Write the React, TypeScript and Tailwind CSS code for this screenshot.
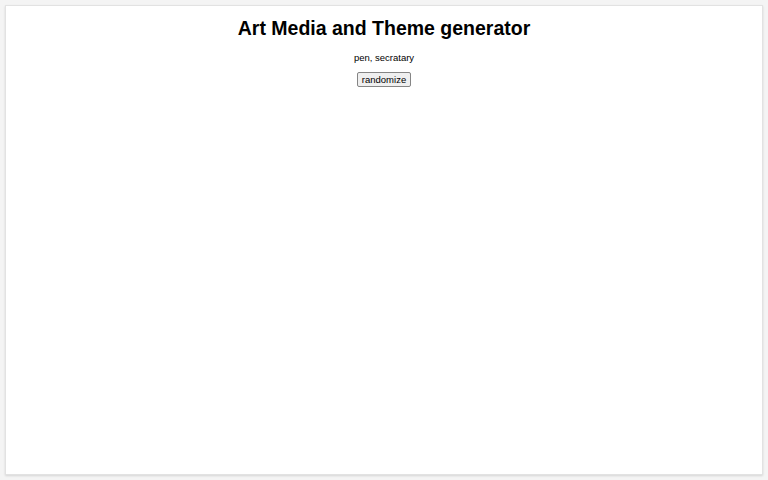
import React, { useState } from 'react';

const media = ['pen', 'pencil', 'charcoal', 'ink', 'watercolor', 'oil', 'pastel'];
const themes = ['secratary', 'forest', 'ocean', 'city', 'winter', 'dream'];

export default function App() {
  const [combo, setCombo] = useState({ medium: 'pen', theme: 'secratary' });

  const randomize = () => {
    setCombo({
      medium: media[Math.floor(Math.random() * media.length)],
      theme: themes[Math.floor(Math.random() * themes.length)],
    });
  };

  return (
    <div className="min-h-[480px] bg-[#f4f4f4] p-[5px] flex font-['Liberation_Sans',Arial,sans-serif]">
      <div className="flex-1 bg-white border border-[#e2e2e2] shadow-[0_1px_2px_rgba(0,0,0,0.12)] flex flex-col items-center pt-[11px]">
        <h1 className="text-[19.5px] leading-[23px] font-bold text-black">Art Media and Theme generator</h1>
        <p className="mt-[12px] text-[9.5px] leading-[11px] text-black">
          {combo.medium}, {combo.theme}
        </p>
        <button
          onClick={randomize}
          className="mt-[9px] px-[4px] h-[15px] text-[9.5px] leading-[11px] text-black bg-[#efefef] border border-[#858585] rounded-[2px]"
        >
          randomize
        </button>
      </div>
    </div>
  );
}
